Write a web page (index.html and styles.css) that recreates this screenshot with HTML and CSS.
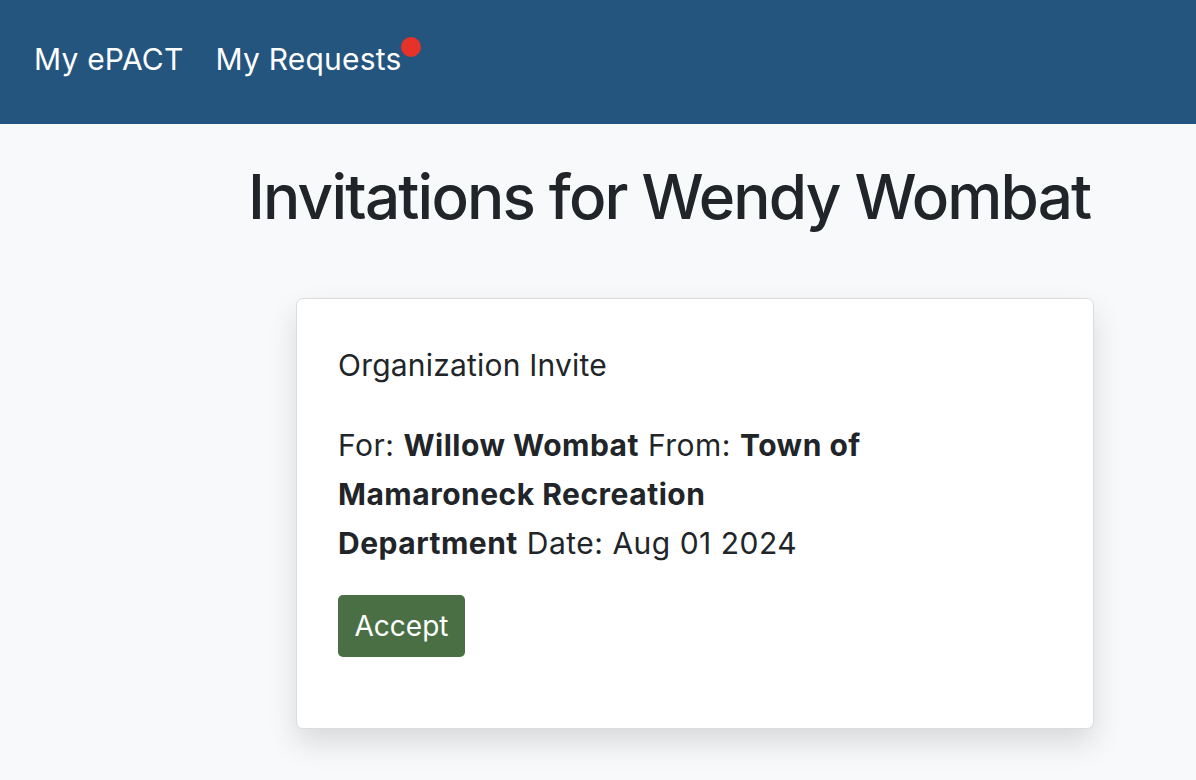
FILE: index.html
```html
<!DOCTYPE html>
<html>
<head>
<meta charset="utf-8">
<link rel="stylesheet" href="styles.css">
</head>
<body>
<nav class="topnav">
  <a class="nav-link" href="#">My ePACT</a>
  <a class="nav-link has-dot" href="#">My Requests<span class="dot"></span></a>
</nav>
<main class="page">
  <h1 class="title">Invitations for Wendy Wombat</h1>
  <section class="card">
    <div class="card-title">Organization Invite</div>
    <p class="card-text">For: <b>Willow Wombat</b> From: <b>Town of Mamaroneck Recreation Department</b> Date: Aug 01 2024</p>
    <button class="btn-accept">Accept</button>
  </section>
</main>
</body>
</html>
```
FILE: styles.css
```css
* { box-sizing: border-box; }
html, body { margin: 0; padding: 0; }
body {
  background: #f8f9fa;
  font-family: Inter, "Liberation Sans", sans-serif;
  color: #212529;
  height: 780px;
  overflow: hidden;
}
.topnav {
  background: #24557f;
  height: 124px;
  display: flex;
  align-items: center;
  gap: 32px;
  padding: 0 34px 6px 34px;
}
.nav-link {
  color: #ffffff;
  text-decoration: none;
  font-size: 30px;
  letter-spacing: 0.2px;
  position: relative;
  line-height: 1;
}
.dot {
  position: absolute;
  width: 20px;
  height: 20px;
  border-radius: 50%;
  background: #e63228;
  right: -20px;
  top: -7px;
}
.page {
  display: flex;
  flex-direction: column;
  padding-left: 248px;
}
.title {
  margin: 36px 0 0 0;
  font-size: 62px;
  font-weight: 500;
  line-height: 1.2;
  letter-spacing: -1.8px;
}
.card {
  margin: 64px 0 0 48px;
  width: 798px;
  height: 431px;
  background: #fff;
  border: 1px solid #dcdcdc;
  border-radius: 7px;
  box-shadow: 0 14px 30px rgba(0,0,0,0.13);
  padding: 42px 41px;
}
.card-title {
  font-size: 30px;
  line-height: 49px;
  letter-spacing: 0.2px;
}
.card-text {
  margin: 31px 0 0 0;
  font-size: 30px;
  line-height: 49px;
  letter-spacing: 0.5px;
  max-width: 545px;
}
.card-text b { font-weight: 700; }
.btn-accept {
  margin-top: 27px;
  background: #4a6f44;
  color: #fff;
  border: none;
  border-radius: 5px;
  font-family: inherit;
  font-size: 28px;
  width: 127px;
  height: 62px;
  padding: 0;
}
```
